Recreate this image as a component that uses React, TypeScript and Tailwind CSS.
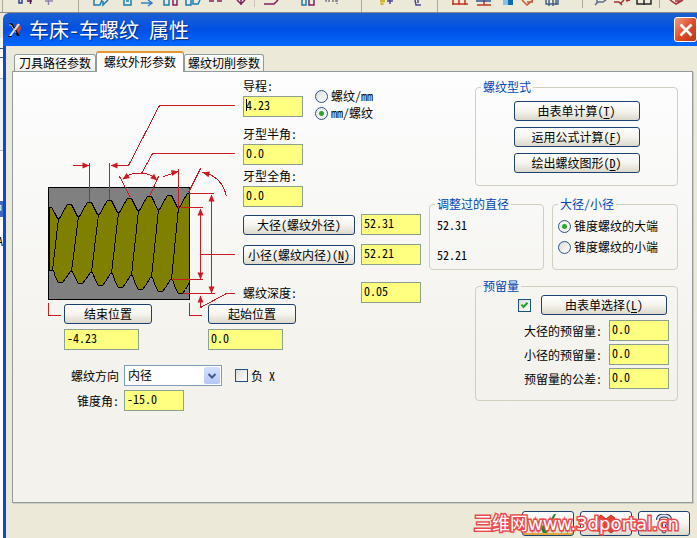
import { useState } from "react";
import type { InputHTMLAttributes, ReactNode } from "react";
import clsx from "clsx";

const fontFamily = "font-['Noto_Sans_Mono_CJK_SC','Liberation_Mono','Noto_Sans_CJK_SC',monospace]";

const buttonStyle =
  "flex items-center justify-center rounded-[3px] border border-[#1c4272] bg-linear-to-b from-white via-[#f5f4ee] to-[#dcd8cb] leading-4 whitespace-nowrap";

interface XpButtonProps {
  className?: string;
  hotkey?: string;
  children: ReactNode;
}

function XpButton({ className, hotkey, children }: XpButtonProps) {
  return (
    <button type="button" className={clsx(buttonStyle, "h-5", className)}>
      <span>
        {children}
        {hotkey ? (
          <>
            (<u className="underline-offset-2">{hotkey}</u>)
          </>
        ) : null}
      </span>
    </button>
  );
}

function NumberBox({ className, ...props }: InputHTMLAttributes<HTMLInputElement>) {
  return (
    <input
      type="text"
      className={clsx(
        "block h-[21px] border border-[#8ba28c] bg-[#ffff80] pb-[4px] pl-[2px] leading-4 outline-none",
        className ?? "w-[60px]",
      )}
      {...props}
    />
  );
}

interface RadioProps {
  name: string;
  label: string;
  checked: boolean;
  onChange: () => void;
}

function Radio({ name, label, checked, onChange }: RadioProps) {
  return (
    <label className="flex h-4 items-center gap-[3px] whitespace-nowrap">
      <input
        type="radio"
        name={name}
        checked={checked}
        onChange={onChange}
        className="size-[13px] shrink-0 appearance-none rounded-full border border-[#2f5480] bg-linear-to-br from-[#dcdcd6] to-white checked:bg-[radial-gradient(circle,#2fa52f_0,#2fa52f_2px,#f2f2ee_3px)]"
      />
      {label}
    </label>
  );
}

interface CheckProps {
  id?: string;
  checked: boolean;
  onChange: () => void;
  "aria-label"?: string;
}

function Check(props: CheckProps) {
  return (
    <span className="relative block size-[13px] shrink-0">
      <input
        type="checkbox"
        className="block size-[13px] appearance-none border border-[#1c5180] bg-linear-to-br from-[#dcdcd6] to-white"
        {...props}
      />
      {props.checked ? (
        <svg viewBox="0 0 13 13" className="pointer-events-none absolute inset-0 size-[13px]">
          <path d="M3.5 5.5 L5.5 8 L9.5 3.8" fill="none" stroke="#21a121" strokeWidth="2" />
        </svg>
      ) : null}
    </span>
  );
}

interface GroupProps {
  title: string;
  className?: string;
  children: ReactNode;
}

function Group({ title, className, children }: GroupProps) {
  return (
    <fieldset className={clsx("min-w-0 rounded-[4px] border border-[#d0d0bf]", className)}>
      <legend className="ml-[5px] px-[2px] leading-4 text-[#0046b5]">{title}</legend>
      {children}
    </fieldset>
  );
}

// Thread profile: x and y of each crest and root, left to right.
const topRoots = [[58, 218], [78, 216], [98, 214], [118, 212], [138, 210], [158, 209], [178, 207]];
const topCrests = [[69, 204], [89, 202], [109, 200], [129, 198], [149, 196], [169, 195], [189, 193]];
const bottomRoots = [[52, 270], [71, 271], [91, 272], [111, 273], [131, 275], [151, 277], [171, 279]];
const bottomCrests = [[60, 283], [80, 284], [100, 286], [120, 288], [140, 290], [160, 292], [180, 294]];

function threadPath() {
  let d = "M49 207 L51 207 L54 212";
  topRoots.forEach(([x, y], i) => {
    const [cx, cy] = topCrests[i];
    d += ` L${x - 1} ${y} L${x + 1} ${y} L${cx - 5} ${cy + 5} L${cx - 2} ${cy} L${cx} ${cy}`;
    if (i < 6) d += ` L${cx + 2} ${cy} L${cx + 5} ${cy + 6}`;
  });
  d += " L189 282";
  for (let i = 6; i >= 0; i--) {
    const [cx, cy] = bottomCrests[i];
    const [x, y] = bottomRoots[i];
    d += ` L${cx + 5} ${cy - 5} L${cx + 2} ${cy - 1} L${cx - 2} ${cy - 1} L${cx - 5} ${cy - 6} L${x + 1} ${y} L${x - 1} ${y}`;
  }
  return `${d} L49 270 Z`;
}

const arrows: [number, number, number][] = [
  [89, 165, 0],
  [110, 165, 180],
  [122, 179, 145],
  [157, 180, 40],
  [178, 171, -12],
  [202, 172, 195],
  [200, 208, -90],
  [200, 279, 90],
  [211, 194, -90],
  [211, 293, 90],
  [200, 295, -90],
];

function ThreadDiagram() {
  return (
    <svg viewBox="40 78 203 225" className="h-[225px] w-[203px] shrink-0 overflow-visible" role="img" aria-label="螺纹外形">
      <g shapeRendering="crispEdges" stroke="#000">
        <rect x="48.5" y="187.5" width="141" height="112" fill="#808080" />
        <path d={threadPath()} transform="translate(.5 .5)" fill="#808000" />
        {topRoots.map(([x, y], i) => (
          <path key={x} d={`M${x} ${y} L${bottomRoots[i][0]} ${bottomRoots[i][1]}`} transform="translate(.5 .5)" />
        ))}
      </g>
      <g fill="none" stroke="#cc1a22" shapeRendering="crispEdges" transform="translate(.5 .5)">
        <path d="M72 165 H89 M89 162 V201 M109 162 V199 M110 165 H128 L159 105 H234" />
        <path d="M141 173 L152 153 H234 M122 179 Q127 173 137 173 H144 Q152 174 157 180" />
        <path d="M119 176 L130 197 M158 176 L149 196 M163 176 L178 171 M178 168 V207" />
        <path d="M200 168 L188 192 M202 172 Q221 175 226 196" />
        <path d="M188 193 H213 M180 207 H202 M200 208 V279 M211 194 V293 M200 254 H234" />
        <path d="M171 279 H202 M182 293 H214 M200 295 V307 L226 293 H234" />
        <path d="M48 302 V315 H60 M189 302 V315 H201" />
      </g>
      <g fill="#cc1a22">
        {arrows.map(([x, y, angle], i) => (
          <path key={i} d="M0 0 L-7 -3 V3 Z" transform={`translate(${x + 0.5} ${y + 0.5}) rotate(${angle})`} />
        ))}
      </g>
    </svg>
  );
}

function ToolbarStrip() {
  return (
    <div className="h-[13px] shrink-0 overflow-hidden border-b border-[#8a8a80] bg-[#ece9d8]">
      <svg viewBox="0 0 697 12" className="h-3 w-[697px]" aria-hidden="true">
        <g stroke="#aca899">
          <path d="M2.5 0V12M78.5 0V12M361.5 0V12M437.5 0V12M582.5 0V8M659.5 0V8" />
          <path d="M254.5 0V7" stroke="#c9c5b5" />
        </g>
        <g fill="none" strokeWidth="1.5">
          <path d="M19 0v3h3v-3" stroke="#20428c" />
          <path d="M30.5 0v4M27 1h5" stroke="#571c55" />
          <path d="M48.5 0v5M45 1h8" stroke="#8d82aa" />
          <path d="M94 0v5h6l2-5M103 1v4l5-5M124 0v5h7v-5M126 1h3M186 0v5h5v-5M193 0v4h5l2-4M164 0v5h5v-5M302 0v5h4v-5" stroke="#167db5" />
          <path d="M141 3h10M148 0l4 3-4 3" stroke="#347fc4" />
          <path d="M173 0v5h4v-5M309 0v5h5v-5M209 1h5M217 1h5M237 0l4 4 4-4M241 0v5M264 4h10l4-4" stroke="#802060" />
          <path d="M326 0v1h4M332 1h6M337 0v4" stroke="#777b88" strokeDasharray="2 1" />
          <path d="M380 1h5M382 3v2" stroke="#d1b52e" strokeWidth="3" />
          <path d="M390 0v4M387 1h6M415 0l1 5h5M418 0v3" stroke="#4b4b91" />
          <path d="M453 0v5M459 0v5M465 0v5M452 4h16M484 0v5M477 5h14" stroke="#bd3522" />
          <path d="M476 1h15" stroke="#30548f" />
          <path d="M522 0l5 5 6-5M527 2h6" stroke="#c75739" />
          <path d="M546 0v4h12v-4M549 0v6M553 0v6M556 0v5" stroke="#416087" />
          <path d="M595 5l3-3h5l4-3M597 0v4" stroke="#606b92" />
          <path d="M614 2h5l3 3M624 0l-3 3M626 1l4-1" stroke="#a82e31" />
          <path d="M637 0v4h14v-4M644 0v5" stroke="#26262a" />
          <path d="M670 0l6 4 7-4M675 1h6" stroke="#a33137" />
        </g>
        <path d="M503 0h5v5h-5z" fill="#83c3e5" />
        <path d="M508 0h5v5h-5z" fill="#1269ae" />
      </svg>
    </div>
  );
}

// Sliver of the main window that shows beside the dialog.
function MainWindowEdge() {
  return (
    <div className="flex w-[3px] shrink-0 flex-col items-end overflow-hidden bg-white" aria-hidden="true">
      <div className="h-[25px] w-full bg-[#ece9d8]" />
      <div className="mt-[10px] h-[10px] w-full border-y border-[#39578f]" />
      <div className="mt-[20px] h-[73px] w-full border-y border-[#a5b8d6] bg-[#eef2fb]" />
      <div className="mt-[50px] h-4 bg-[#3f68bd] text-white">户</div>
      <div className="mt-4 h-4">A</div>
    </div>
  );
}

function TitleBar() {
  return (
    <header className="flex h-[33px] shrink-0 items-center rounded-tl-[6px] bg-linear-to-b from-[#1b5fd0] via-[#0050e4] to-[#0468ff] pl-[5px]">
      <svg viewBox="0 0 14 16" className="h-4 w-[14px] shrink-0" aria-hidden="true">
        <path d="M8 2h4l1 5-3 5H8z" fill="#bf4a3c" />
        <path d="M1 1 L4 1 L12 14 L9 14 Z" fill="#111" />
        <path d="M2 14 L11 2" stroke="#e6e4df" strokeWidth="2" />
        <path d="M1 3h2l5 8" stroke="#c5c1ba" fill="none" />
        <path d="M0 14.5h4" stroke="#111" />
      </svg>
      <h1 className="ml-[7px] text-[20px] leading-6 font-medium whitespace-nowrap text-white [text-shadow:1px_1px_1px_#0a2b80]">
        车床-车螺纹 属性
      </h1>
      <button
        type="button"
        aria-label="关闭"
        className="ml-auto flex h-[25px] w-[23px] items-center justify-center rounded-[3px] border border-white bg-linear-to-br from-[#ee9a80] via-[#df4f2c] to-[#b93414]"
      >
        <svg viewBox="0 0 16 16" className="size-4" aria-hidden="true">
          <path d="M2.5 2.5 L13.5 13.5 M13.5 2.5 L2.5 13.5" stroke="#fff" strokeWidth="2.6" />
        </svg>
      </button>
    </header>
  );
}

const tabs = ["刀具路径参数", "螺纹外形参数", "螺纹切削参数"];

function Tabs() {
  const [active, setActive] = useState(1);
  return (
    <div role="tablist" className="flex shrink-0 items-end pl-[2px]">
      {tabs.map((tab, i) => (
        <button
          key={tab}
          type="button"
          role="tab"
          aria-selected={i === active}
          onClick={() => setActive(i)}
          className={clsx(
            "rounded-t-[3px] whitespace-nowrap",
            i === active
              ? "relative z-10 -mb-px h-[21px] w-[88px] border-x border-t-2 border-x-[#919b9c] border-t-[#e59732] bg-[#fdfdfe] pb-[2px]"
              : "h-[17px] border border-b-0 border-[#919b9c] bg-linear-to-b from-white to-[#f0efe6]",
            i === 0 && i !== active && "w-[82px]",
            i === 2 && i !== active && "w-[80px]",
          )}
        >
          {tab}
        </button>
      ))}
    </div>
  );
}

function ProfileSection() {
  const [unit, setUnit] = useState("mm");
  return (
    <div className="flex">
      <ThreadDiagram />
      <div className="flex flex-col">
        <div className="flex gap-3">
          <div className="flex flex-col gap-[2px]">
            <label htmlFor="lead" className="leading-4">导程:</label>
            <div className="relative">
              <NumberBox id="lead" defaultValue="4.23" />
              <span className="absolute top-[3px] left-[3px] h-3 w-px bg-black" />
            </div>
          </div>
          <div className="flex flex-col gap-px pt-[10px]">
            <Radio name="unit" label="螺纹/mm" checked={unit === "thread"} onChange={() => setUnit("thread")} />
            <Radio name="unit" label="mm/螺纹" checked={unit === "mm"} onChange={() => setUnit("mm")} />
          </div>
        </div>
        <div className="mt-[5px] flex flex-col gap-[2px]">
          <label htmlFor="half-angle" className="leading-4">牙型半角:</label>
          <NumberBox id="half-angle" defaultValue="0.0" />
        </div>
        <div className="mt-[3px] flex flex-col gap-[2px]">
          <label htmlFor="full-angle" className="leading-4">牙型全角:</label>
          <NumberBox id="full-angle" defaultValue="0.0" />
        </div>
        <div className="mt-[7px] flex items-center gap-[6px]">
          <XpButton className="w-[112px]">大径(螺纹外径)</XpButton>
          <NumberBox aria-label="大径" defaultValue="52.31" />
        </div>
        <div className="mt-[9px] flex items-center gap-[6px]">
          <XpButton className="w-[112px]" hotkey="N">小径(螺纹内径)</XpButton>
          <NumberBox aria-label="小径" defaultValue="52.21" />
        </div>
        <div className="mt-[17px] flex items-center justify-between">
          <label htmlFor="depth">螺纹深度:</label>
          <NumberBox id="depth" defaultValue="0.05" />
        </div>
      </div>
    </div>
  );
}

function PositionSection() {
  const [negativeX, setNegativeX] = useState(false);
  return (
    <div className="pt-px">
      <div className="flex gap-[56px] pl-6">
        <div className="flex flex-col gap-[5px]">
          <XpButton className="w-[88px]">结束位置</XpButton>
          <NumberBox className="w-[75px]" aria-label="结束位置" defaultValue="-4.23" />
        </div>
        <div className="flex flex-col gap-[5px]">
          <XpButton className="w-[88px]">起始位置</XpButton>
          <NumberBox className="w-[75px]" aria-label="起始位置" defaultValue="0.0" />
        </div>
      </div>
      <div className="mt-[15px] grid grid-cols-[79px_1fr] items-center gap-x-[5px] gap-y-1 text-right">
        <label htmlFor="direction">螺纹方向</label>
        <div className="flex items-center gap-[13px]">
          <div className="relative">
            <select
              id="direction"
              className="block h-[21px] w-[98px] appearance-none border border-[#7f9db9] bg-white pb-px pl-[3px] leading-4 outline-none"
            >
              <option>内径</option>
              <option>外径</option>
            </select>
            <span className="pointer-events-none absolute top-[2px] right-[2px] flex h-[17px] w-4 items-center justify-center rounded-[2px] bg-linear-to-b from-[#d5e0fd] to-[#b4c8f6]">
              <svg viewBox="0 0 10 8" className="h-2 w-[10px]" aria-hidden="true">
                <path d="M1.5 2 L5 5.5 L8.5 2" fill="none" stroke="#455b87" strokeWidth="2" />
              </svg>
            </span>
          </div>
          <div className="flex items-center gap-[3px]">
            <Check id="negative-x" checked={negativeX} onChange={() => setNegativeX(!negativeX)} />
            <label htmlFor="negative-x">负 X</label>
          </div>
        </div>
        <label htmlFor="taper">锥度角:</label>
        <NumberBox id="taper" defaultValue="-15.0" />
      </div>
    </div>
  );
}

const allowances = [
  { id: "major-allowance", label: "大径的预留量:" },
  { id: "minor-allowance", label: "小径的预留量:" },
  { id: "tolerance", label: "预留量的公差:" },
];

function GroupsColumn() {
  const [end, setEnd] = useState("major");
  const [fromTable, setFromTable] = useState(true);
  return (
    <div className="flex w-[249px] shrink-0 flex-col items-end pt-px">
      <Group title="螺纹型式" className="w-[203px] pb-3">
        <div className="flex flex-col items-center gap-[6px] pt-[6px]">
          <XpButton className="w-[126px]" hotkey="T">由表单计算</XpButton>
          <XpButton className="w-[126px]" hotkey="F">运用公式计算</XpButton>
          <XpButton className="w-[126px]" hotkey="D">绘出螺纹图形</XpButton>
        </div>
      </Group>
      <div className="mt-[10px] flex w-full gap-2">
        <Group title="调整过的直径" className="h-[74px] w-[115px]">
          <div className="flex flex-col gap-[14px] pt-[5px] pl-[7px] leading-4">
            <span>52.31</span>
            <span>52.21</span>
          </div>
        </Group>
        <Group title="大径/小径" className="h-[74px] flex-1">
          <div className="flex flex-col gap-[5px] pt-[6px] pl-[5px]">
            <Radio name="end" label="锥度螺纹的大端" checked={end === "major"} onChange={() => setEnd("major")} />
            <Radio name="end" label="锥度螺纹的小端" checked={end === "minor"} onChange={() => setEnd("minor")} />
          </div>
        </Group>
      </div>
      <Group title="预留量" className="mt-2 w-[203px] pr-2 pb-[11px]">
        <div className="flex items-center justify-end gap-[10px] pt-px pr-[2px]">
          <Check aria-label="预留量" checked={fromTable} onChange={() => setFromTable(!fromTable)} />
          <XpButton className="w-[126px]" hotkey="L">由表单选择</XpButton>
        </div>
        <div className="mt-[5px] flex flex-col gap-[3px]">
          {allowances.map(({ id, label }) => (
            <div key={id} className="flex items-center justify-end gap-[7px]">
              <label htmlFor={id}>{label}</label>
              <NumberBox id={id} defaultValue="0.0" />
            </div>
          ))}
        </div>
      </Group>
    </div>
  );
}

function Footer() {
  return (
    <footer className="relative flex shrink-0 justify-end gap-[6px] pt-[8px] pr-[7px] pb-[2px]">
      <button type="button" aria-label="确定" className={clsx(buttonStyle, "h-[25px] w-[52px] shadow-[inset_0_-2px_0_#e5a83c]")}>
        <svg viewBox="0 0 18 20" className="h-5 w-[18px]" aria-hidden="true">
          <path d="M1 13 L4 11 L6 14 L15 0 L17 0 L8 19 L4 19 Z" fill="#278a1c" />
        </svg>
      </button>
      <button type="button" aria-label="取消" className={clsx(buttonStyle, "h-[25px] w-[52px]")}>
        <svg viewBox="0 0 20 20" className="size-5" aria-hidden="true">
          <path d="M1 4 L5 1 L10 5 L15 1 L19 4 L14 10 L19 16 L15 19 L10 15 L5 19 L1 16 L6 10 Z" fill="#e2452b" stroke="#b2301c" />
        </svg>
      </button>
      <button type="button" aria-label="帮助" className={clsx(buttonStyle, "h-[25px] w-[52px]")}>
        <svg viewBox="0 0 18 20" className="h-5 w-[18px]" aria-hidden="true">
          <path d="M3 6 Q3 1.5 9 1.5 Q15 1.5 15 6 Q15 9 9 10 V13" fill="none" stroke="#24365a" strokeWidth="4" />
          <path d="M3 6 Q3 1.5 9 1.5 Q15 1.5 15 6 Q15 9 9 10 V13" fill="none" stroke="#dfe5f2" strokeWidth="2" />
          <circle cx="9" cy="17" r="2" fill="#fff" stroke="#24365a" />
        </svg>
      </button>
      <span className="pointer-events-none absolute right-[18px] bottom-[4px] font-['DejaVu_Sans','Noto_Sans_CJK_SC',sans-serif] text-[18px] leading-5 whitespace-nowrap text-white [paint-order:stroke_fill] [-webkit-text-stroke:3px_#ea4a4e]">
        三维网www.3dportal.cn
      </span>
    </footer>
  );
}

export default function App() {
  return (
    <div className={clsx("flex min-h-screen flex-col overflow-hidden bg-[#ece9d8] text-[12px] leading-4 text-black", fontFamily)}>
      <ToolbarStrip />
      <div className="flex flex-1">
        <MainWindowEdge />
        <main className="flex min-w-0 flex-1 flex-col">
          <TitleBar />
          <div className="flex flex-1 flex-col border-l-[3px] border-[#0a4bd0] bg-[#ece9d8] pt-[5px] pl-[6px]">
            <Tabs />
            <div role="tabpanel" className="mr-1 flex flex-1 items-start justify-between border border-[#919b9c] bg-linear-to-b from-[#fdfdfe] to-[#f3f2ec] to-70% pt-[6px] pr-[14px] pb-4 pl-[27px] shadow-[1px_1px_0_#d0cebf]">
              <div>
                <ProfileSection />
                <PositionSection />
              </div>
              <GroupsColumn />
            </div>
            <Footer />
          </div>
        </main>
      </div>
    </div>
  );
}
